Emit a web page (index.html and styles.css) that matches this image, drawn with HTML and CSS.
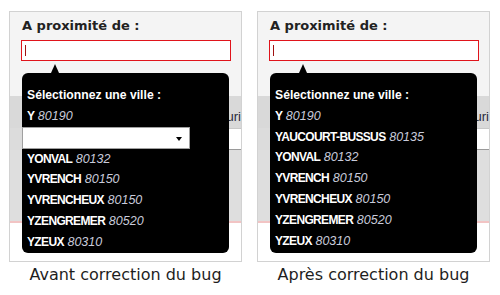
FILE: index.html
```html
<!DOCTYPE html>
<html lang="fr">
  <head>
    <meta charset="UTF-8" />
    <meta name="viewport" content="width=device-width, initial-scale=1.0" />
    <title>Correction du bug</title>
    <link rel="stylesheet" href="styles.css">
  </head>
  <body>
    <div class="shots">
      <figure class="shot">
        <div class="panel">
          <div class="field">
            <label class="field-label">A proximité de :</label>
            <div class="field-input"><span class="caret"></span></div>
          </div>
          <div class="bar"><span>Parcouri</span></div>
          <div class="strip"><span class="strip-box"></span></div>
          <div class="zone"></div>
          <div class="rule"></div>
          <div class="rest"></div>

          <div class="suggest">
            <p class="suggest-title">Sélectionnez une ville :</p>
            <p class="city">Y <em>80190</em></p>
            <div class="broken-select"><span class="select-arrow"></span></div>
            <p class="city">YONVAL <em>80132</em></p>
            <p class="city">YVRENCH <em>80150</em></p>
            <p class="city">YVRENCHEUX <em>80150</em></p>
            <p class="city">YZENGREMER <em>80520</em></p>
            <p class="city">YZEUX <em>80310</em></p>
          </div>
        </div>
        <figcaption>Avant correction du bug</figcaption>
      </figure>

      <figure class="shot">
        <div class="panel">
          <div class="field">
            <label class="field-label">A proximité de :</label>
            <div class="field-input"><span class="caret"></span></div>
          </div>
          <div class="bar"><span>Parcouri</span></div>
          <div class="strip"><span class="strip-box"></span></div>
          <div class="zone"></div>
          <div class="rule"></div>
          <div class="rest"></div>

          <div class="suggest">
            <p class="suggest-title">Sélectionnez une ville :</p>
            <p class="city">Y <em>80190</em></p>
            <p class="city">YAUCOURT-BUSSUS <em>80135</em></p>
            <p class="city">YONVAL <em>80132</em></p>
            <p class="city">YVRENCH <em>80150</em></p>
            <p class="city">YVRENCHEUX <em>80150</em></p>
            <p class="city">YZENGREMER <em>80520</em></p>
            <p class="city">YZEUX <em>80310</em></p>
          </div>
        </div>
        <figcaption>Après correction du bug</figcaption>
      </figure>
    </div>
  </body>
</html>
```

FILE: styles.css
```css
* {
  margin: 0;
  padding: 0;
  box-sizing: border-box;
}
body {
  background: #fff;
  font-family: "DejaVu Sans", sans-serif;
  color: #222;
}
.shots {
  display: flex;
  gap: 15px;
  padding: 11px 0 0 9px;
}
.shot {
  width: 233px;
}

.panel {
  position: relative;
  display: flex;
  flex-direction: column;
  height: 251px;
  border: 1px solid #d2d2d2;
  overflow: hidden;
  background: #fff;
}
.field {
  height: 84px;
  padding: 4px 10px 0 11px;
  background: #f4f4f4;
}
.field-label {
  display: block;
  padding-left: 1px;
  font-family: "DejaVu Sans", sans-serif;
  font-weight: bold;
  font-size: 13px;
  line-height: 20px;
  color: #222;
}
.field-input {
  margin-top: 4px;
  height: 21px;
  width: 210px;
  background: #fff;
  border: 1px solid #e0141b;
  padding: 4px 0 0 3px;
}
.caret {
  display: block;
  width: 1px;
  height: 11px;
  background: #a01010;
}
.bar {
  height: 32px;
  display: flex;
  justify-content: flex-end;
  align-items: flex-end;
  padding-bottom: 4px;
  background: #d9d9d9;
  font-family: "Liberation Sans", sans-serif;
  font-size: 13px;
  color: #2a2a3a;
  white-space: nowrap;
  overflow: hidden;
}
.strip {
  height: 22px;
  display: flex;
  justify-content: flex-end;
  background: #dcdcdc;
}
.strip-box {
  width: 120px;
  background: #fff;
  border-top: 1px solid #c8c8c8;
  border-bottom: 1px solid #9a9a9a;
}
.zone {
  height: 71px;
  background: #dedede;
}
.rule {
  height: 2px;
  background: #f2c4c4;
}
.rest {
  flex: 1;
  background: #fff;
}

.suggest {
  position: absolute;
  left: 12px;
  top: 61px;
  width: 207px;
  height: 180px;
  padding: 12px 0 0 5px;
  background: #000;
  border-radius: 6px;
  color: #fff;
  font-family: "Liberation Sans", sans-serif;
  font-weight: bold;
  line-height: 20.8px;
}
.suggest::before {
  content: "";
  position: absolute;
  left: 29px;
  top: -9px;
  border: 4px solid transparent;
  border-top-width: 0;
  border-bottom: 9px solid #000;
}
.suggest-title {
  font-size: 12.2px;
  white-space: nowrap;
}
.city {
  font-size: 12px;
  letter-spacing: -0.65px;
  white-space: nowrap;
}
.city em {
  margin-left: 1px;
  font-size: 12.5px;
  font-weight: normal;
  letter-spacing: 0;
  color: #c8cbdb;
}
.broken-select {
  position: relative;
  width: 168px;
  height: 22px;
  margin: 0 0 0 -5px;
  background: #fff;
  border: 1px solid #a0a0a0;
}
.select-arrow {
  position: absolute;
  right: 7px;
  top: 9px;
  border: 3.5px solid transparent;
  border-bottom-width: 0;
  border-top: 4px solid #000;
}

figcaption {
  margin-top: 2px;
  text-align: center;
  font-family: "DejaVu Sans", sans-serif;
  font-size: 16px;
  line-height: 22px;
  color: #1e1e1e;
}
```
